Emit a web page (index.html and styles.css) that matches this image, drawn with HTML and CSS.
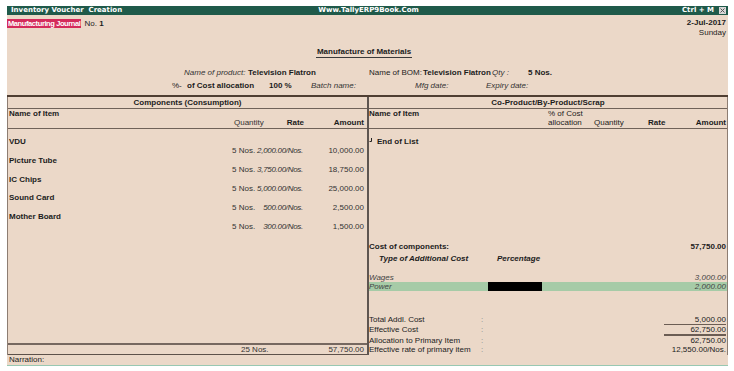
FILE: index.html
```html
<!DOCTYPE html>
<html lang="en">

<head>
    <meta charset="UTF-8">
    <meta name="viewport" content="width=device-width, initial-scale=1.0">
    <title>Inventory Voucher Creation</title>
    <link rel="stylesheet" href="styles.css">
</head>

<body>
    <div class="screen">
        <div class="titlebar">
            <span class="tb-left">Inventory Voucher&nbsp; Creation</span>
            <span class="tb-center">Www.TallyERP9Book.Com</span>
            <span class="tb-right">Ctrl + M
                <svg class="close-box" width="7" height="7" viewBox="0 0 7 7">
                    <rect x="0" y="0" width="7" height="7" fill="#d8d8d8" />
                    <path d="M1.5 1.5L5.5 5.5M5.5 1.5L1.5 5.5" stroke="#555" stroke-width="1" />
                </svg>
            </span>
        </div>

        <div class="voucher-head">
            <div class="head-top">
                <div class="vch-type"><span class="badge">Manufacturing Journal</span>No.&nbsp;<b>1</b></div>
                <div class="vch-date"><b>2-Jul-2017</b><span>Sunday</span></div>
            </div>
            <div class="doc-title"><span>Manufacture of Materials</span></div>
            <div class="info-row row-product">
                <span class="lbl">Name of product:</span>
                <b>Television Flatron</b>
                <span>Name of BOM:</span>
                <b>Television Flatron</b>
                <span class="lbl">Qty :</span>
                <b>5 Nos.</b>
            </div>
            <div class="info-row row-cost">
                <span>%-</span>
                <b>of Cost allocation</b>
                <b>100 %</b>
                <span class="lbl">Batch name:</span>
                <span class="lbl">Mfg date:</span>
                <span class="lbl">Expiry date:</span>
            </div>
        </div>

        <div class="panels">
            <div class="panel panel-left">
                <div class="panel-title">Components (Consumption)</div>
                <div class="col-heads">
                    <div class="item-name">Name of Item</div>
                    <div class="cols-left">
                        <span></span>
                        <span class="c-qty head-qty">Quantity</span>
                        <b class="c-num">Rate</b>
                        <b class="c-num">Amount</b>
                    </div>
                </div>
                <div class="items">
                    <div class="item">
                        <div class="item-name">VDU</div>
                        <div class="cols-left">
                            <span></span><span class="c-qty">5 Nos.</span><i class="c-num rate">2,000.00/Nos.</i><span class="c-num">10,000.00</span>
                        </div>
                    </div>
                    <div class="item">
                        <div class="item-name">Picture Tube</div>
                        <div class="cols-left">
                            <span></span><span class="c-qty">5 Nos.</span><i class="c-num rate">3,750.00/Nos.</i><span class="c-num">18,750.00</span>
                        </div>
                    </div>
                    <div class="item">
                        <div class="item-name">IC Chips</div>
                        <div class="cols-left">
                            <span></span><span class="c-qty">5 Nos.</span><i class="c-num rate">5,000.00/Nos.</i><span class="c-num">25,000.00</span>
                        </div>
                    </div>
                    <div class="item">
                        <div class="item-name">Sound Card</div>
                        <div class="cols-left">
                            <span></span><span class="c-qty">5 Nos.</span><i class="c-num rate">500.00/Nos.</i><span class="c-num">2,500.00</span>
                        </div>
                    </div>
                    <div class="item">
                        <div class="item-name">Mother Board</div>
                        <div class="cols-left">
                            <span></span><span class="c-qty">5 Nos.</span><i class="c-num rate">300.00/Nos.</i><span class="c-num">1,500.00</span>
                        </div>
                    </div>
                </div>
                <div class="total-row cols-left">
                    <span></span><span class="c-qty total-qty">25 Nos.</span><span></span><span class="c-num">57,750.00</span>
                </div>
            </div>

            <div class="panel panel-right">
                <div class="panel-title">Co-Product/By-Product/Scrap</div>
                <div class="col-heads">
                    <div class="cols-right">
                        <b>Name of Item</b><span>% of Cost</span>
                    </div>
                    <div class="cols-right">
                        <span></span><span>allocation</span><span>Quantity</span><b>Rate</b><b class="c-num">Amount</b>
                    </div>
                </div>
                <div class="right-body">
                    <div class="eol">
                        <svg class="eol-mark" width="4" height="5" viewBox="0 0 4 5">
                            <path d="M2.5 0V3.5H0.5" fill="none" stroke="#222" stroke-width="1" />
                        </svg>
                        <b>End of List</b>
                    </div>
                </div>
                <div class="cost-block">
                    <div class="cost-row"><span>Cost of components:</span><span>57,750.00</span></div>
                    <div class="addl-head"><span>Type of Additional Cost</span><span>Percentage</span></div>
                    <div class="addl-row first-addl"><span>Wages</span><span></span><span class="c-num">3,000.00</span></div>
                    <div class="addl-row active"><span>Power</span><span class="pct-box"></span><span class="c-num">2,000.00</span></div>
                    <div class="sum-row first-sum"><span>Total Addl. Cost</span><span class="colon">:</span><span class="c-num rule-thin">5,000.00</span></div>
                    <div class="sum-row"><span>Effective Cost</span><span class="colon">:</span><span class="c-num rule-thick">62,750.00</span></div>
                    <div class="sum-row"><span>Allocation to Primary Item</span><span class="colon">:</span><span class="c-num">62,750.00</span></div>
                    <div class="sum-row"><span>Effective rate of primary item</span><span class="colon">:</span><span class="c-num">12,550.00/Nos.</span></div>
                </div>
            </div>
        </div>

        <div class="narration">Narration:</div>
    </div>
</body>

</html>
```

FILE: styles.css
```css
* {
    box-sizing: border-box;
}

body {
    margin: 0;
    background-color: #FFFFFF;
    font-family: "Liberation Sans", Arial, sans-serif;
    font-size: 8px;
    color: #1c1c1c;
}

.screen {
    width: 721px;
    margin: 6px 0 0 7px;
    background-color: #ebd8c8;
}

/* title bar */
.titlebar {
    display: grid;
    grid-template-columns: 1fr auto 1fr;
    height: 9px;
    padding: 0 2px 0 4px;
    background-color: #1f5a4a;
    color: #FFFFFF;
    font-family: "DejaVu Sans", sans-serif;
    font-weight: bold;
    font-size: 7px;
    line-height: 9px;
    white-space: nowrap;
}

.tb-right {
    display: flex;
    justify-content: flex-end;
    align-items: center;
    gap: 5px;
}

.close-box {
    display: block;
}

/* voucher header */
.voucher-head {
    padding: 3px 2px 4px 0;
}

.head-top {
    display: flex;
    justify-content: space-between;
}

.vch-type {
    display: flex;
    margin-top: 1px;
    height: 9px;
    line-height: 9px;
}

.badge {
    background-color: #d42b5b;
    color: #FFFFFF;
    font-weight: bold;
    font-size: 7.5px;
    letter-spacing: -0.4px;
    padding: 0 1px;
    margin-right: 3px;
}

.vch-date {
    display: flex;
    flex-direction: column;
    align-items: flex-end;
    line-height: 10px;
}

.doc-title {
    text-align: center;
    margin-top: 9px;
    padding-right: 5px;
    line-height: 10px;
}

.doc-title>span {
    display: inline-block;
    font-weight: bold;
    border-bottom: 1px solid #3a3a3a;
    padding: 0 1px;
}

.info-row {
    display: grid;
    line-height: 10px;
    white-space: nowrap;
}

.row-product {
    grid-template-columns: 64px 121px 54px 69px 36px auto;
    margin-top: 10px;
    padding-left: 177px;
}

.row-cost {
    grid-template-columns: 15px 82px 42px 104px 71px auto;
    margin-top: 3px;
    padding-left: 165px;
}

.lbl {
    font-style: italic;
    color: #333;
}

/* panels */
.panels {
    display: flex;
    height: 260px;
    border-top: 2px solid #4f3e32;
}

.panel {
    display: flex;
    flex-direction: column;
}

.panel-left {
    width: 360px;
    border-left: 1px solid #8d7d72;
}

.panel-right {
    flex: 1;
    border-left: 2px solid #5e5550;
    border-right: 1px solid #8d7d72;
}

.panel-title {
    text-align: center;
    font-weight: bold;
    line-height: 11px;
    border-bottom: 1px solid #6f6259;
}

.col-heads {
    line-height: 9px;
    padding-bottom: 1px;
    border-bottom: 1px solid #6f6259;
}

.cols-left {
    display: grid;
    grid-template-columns: 1fr 26px 46px 60px;
    padding: 0 3px 0 1px;
    white-space: nowrap;
}

.cols-right {
    display: grid;
    grid-template-columns: 179px 46px 54px 32px 1fr;
    padding-right: 1px;
    white-space: nowrap;
}

.c-num {
    justify-self: end;
    text-align: right;
}

.rate {
    letter-spacing: -0.3px;
    padding-right: 1px;
}

.head-qty {
    padding-left: 2px;
    color: #333;
}

.item-name {
    font-weight: bold;
    padding-left: 1px;
}

.items {
    flex: 1;
    padding-top: 8px;
    line-height: 9.4px;
}

.items .cols-left {
    color: #333;
}

.total-row {
    line-height: 9px;
    border-top: 2px solid #766860;
    border-bottom: 1px solid #5d514a;
    color: #333;
}

.total-qty {
    padding-left: 9px;
}

/* right side */
.right-body {
    flex: 1;
    padding-top: 8px;
}

.eol {
    display: flex;
    align-items: flex-start;
    gap: 4px;
    line-height: 9.4px;
}

.eol-mark {
    margin-top: 1px;
}

.cost-block {
    padding-bottom: 1px;
}

.cost-row {
    display: flex;
    justify-content: space-between;
    line-height: 9px;
    font-weight: bold;
    padding-right: 1px;
}

.addl-head {
    display: grid;
    grid-template-columns: 118px auto;
    margin-top: 3px;
    padding-left: 10px;
    line-height: 9px;
    font-weight: bold;
    font-style: italic;
}

.addl-row {
    display: grid;
    grid-template-columns: 119px 54px 1fr;
    line-height: 9px;
    font-style: italic;
    color: #444;
    padding-right: 1px;
}

.first-addl {
    margin-top: 10px;
}

.addl-row.active {
    background-color: #a6cba7;
}

.active .pct-box {
    background-color: #000000;
}

.sum-row {
    display: grid;
    grid-template-columns: 112px 1fr 62px;
    line-height: 9px;
    color: #222;
    padding-right: 1px;
}

.sum-row .c-num {
    justify-self: stretch;
}

.first-sum {
    margin-top: 24px;
}

.colon {
    color: #888;
}

.rule-thin {
    border-bottom: 1px solid #6b5d54;
}

.rule-thick {
    border-bottom: 2px solid #6b5d54;
}

.narration {
    line-height: 10px;
    padding-left: 2px;
    border-bottom: 1px solid #98c8b2;
}
```
